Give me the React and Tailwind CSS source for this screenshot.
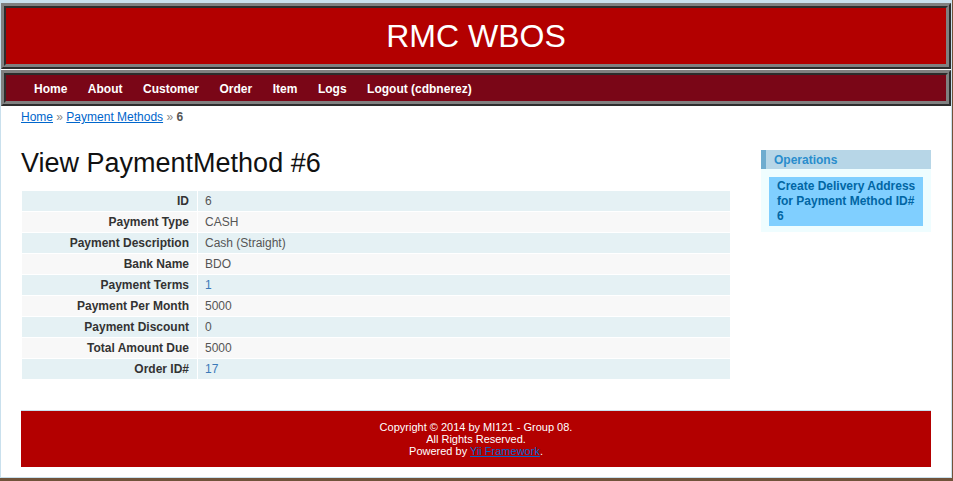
const navItems = ['Home', 'About', 'Customer', 'Order', 'Item', 'Logs', 'Logout (cdbnerez)'];

const details = [
  { label: 'ID', value: '6' },
  { label: 'Payment Type', value: 'CASH' },
  { label: 'Payment Description', value: 'Cash (Straight)' },
  { label: 'Bank Name', value: 'BDO' },
  { label: 'Payment Terms', value: '1', link: true },
  { label: 'Payment Per Month', value: '5000' },
  { label: 'Payment Discount', value: '0' },
  { label: 'Total Amount Due', value: '5000' },
  { label: 'Order ID#', value: '17', link: true },
];

function DetailRow({ label, value, link, odd }) {
  return (
    <div className={`flex h-[20px] gap-[1px] ${odd ? 'bg-[#E5F1F4]' : 'bg-[#F8F8F8]'}`}>
      <div className="w-[174px] pr-[7px] text-right font-bold text-[#333] leading-[20px]">{label}</div>
      <div className="w-[1px] bg-white" />
      <div className={`flex-1 pl-[6px] leading-[20px] ${link ? 'text-[#3b7ab8]' : 'text-[#555]'}`}>{value}</div>
    </div>
  );
}

export default function App() {
  return (
    <div className="w-[953px] h-[481px] bg-[#70533a] font-['Liberation_Sans',Arial,sans-serif] text-[12px]">
      <div className="w-[952px] h-[478px] bg-white border border-t-0 border-[#C9E0ED] flex flex-col">
        {/* header */}
        <div className="border-t-[3px] border-t-[#C9E0ED]">
          <div className="h-[66px] border-[5px] [border-style:ridge] border-[#808080] bg-[#b30000] flex items-center justify-center text-white text-[32px] leading-none">
            RMC WBOS
          </div>
          <div className="mt-[1px] h-[36px] border-[5px] [border-style:ridge] border-[#808080] bg-[#7a0617] flex items-center pl-[28px] pt-[2px] gap-[20.5px]">
            {navItems.map((item) => (
              <a key={item} className="text-white font-bold text-[12px] leading-none">
                {item}
              </a>
            ))}
          </div>
        </div>

        {/* breadcrumbs */}
        <div className="px-[20px] pt-[4px] leading-[15px] text-[#555]">
          <a className="text-[#0066cc] underline">Home</a>
          <span className="text-[#888]"> » </span>
          <a className="text-[#0066cc] underline">Payment Methods</a>
          <span className="text-[#888]"> » </span>
          <span className="font-bold text-[#555]">6</span>
        </div>

        <div className="flex px-[20px] pt-[25px]">
          <div className="w-[710px]">
            <h1 className="h-[26px] text-[27px] leading-[26px] text-[#111]">View PaymentMethod #6</h1>
            <div className="mt-[15px] ml-[1px] w-[708px] flex flex-col gap-[1px]">
              {details.map((d, i) => (
                <DetailRow key={d.label} {...d} odd={i % 2 === 0} />
              ))}
            </div>
          </div>

          <div className="ml-[30px] w-[170px]">
            <div className="h-[19px] bg-[#B7D6E7] border-l-[5px] border-[#6FACCF] pl-[8px] flex items-center">
              <span className="font-bold text-[12px] text-[#298dcd]">Operations</span>
            </div>
            <div className="bg-[#EFFDFF] px-[8px] pt-[8px] pb-[6px]">
              <a className="block bg-[#80CFFF] pl-[8px] py-[2px] font-bold text-[12px] leading-[15px] text-[#0066A4]">
                Create Delivery Address
                <br />
                for Payment Method ID#
                <br />
                6
              </a>
            </div>
          </div>
        </div>

        {/* footer */}
        <div className="mx-[20px] mt-[31px] border-t border-[#C9E0ED] bg-[#b30000] py-[10px] text-center text-white text-[11px] leading-[12px]">
          <div>Copyright © 2014 by MI121 - Group 08.</div>
          <div>All Rights Reserved.</div>
          <div>
            Powered by <a className="text-[#0066cc] underline">Yii Framework</a>.
          </div>
        </div>
      </div>
    </div>
  );
}
